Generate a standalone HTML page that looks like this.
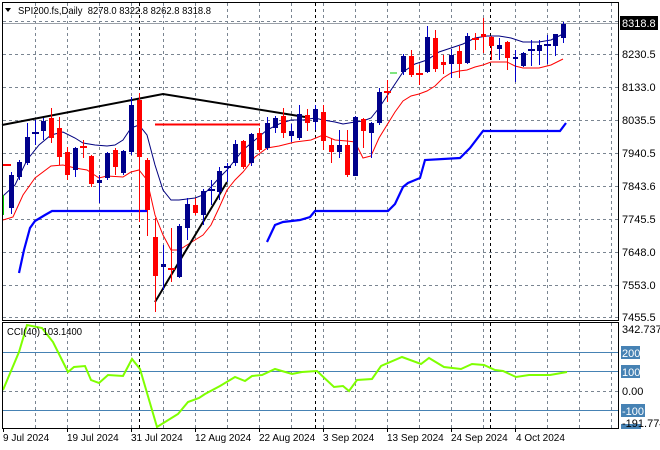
<!DOCTYPE html>
<html><head><style>
html,body{margin:0;padding:0;background:#fff;}
svg{display:block;font-family:"Liberation Sans",sans-serif;font-size:11px;}
.s{font-size:10px;}
</style></head><body>
<svg width="660" height="450" viewBox="0 0 660 450" xmlns="http://www.w3.org/2000/svg">
<rect width="660" height="450" fill="#fff"/>
<g stroke="#7a8591" stroke-width="1" stroke-dasharray="3,3" fill="none" shape-rendering="crispEdges">
<path d="M3 21.5H618M3 54.5H618M3 87.5H618M3 120.5H618M3 153.5H618M3 186.5H618M3 219.5H618M3 252.5H618M3 285.5H618M3 317.5H618"/>
<path d="M35.5 3V320M67.5 3V320M99.5 3V320M131.5 3V320M163.5 3V320M195.5 3V320M227.5 3V320M259.5 3V320M291.5 3V320M323.5 3V320M355.5 3V320M387.5 3V320M419.5 3V320M451.5 3V320M483.5 3V320M515.5 3V320M547.5 3V320M579.5 3V320M611.5 3V320"/>
<path d="M35.5 323V428M67.5 323V428M99.5 323V428M131.5 323V428M163.5 323V428M195.5 323V428M227.5 323V428M259.5 323V428M291.5 323V428M323.5 323V428M355.5 323V428M387.5 323V428M419.5 323V428M451.5 323V428M483.5 323V428M515.5 323V428M547.5 323V428M579.5 323V428M611.5 323V428M3 391.5H618"/>
</g>
<g stroke="#000" stroke-dasharray="3,3" shape-rendering="crispEdges">
<path d="M139.5 3V320M315.5 3V320M490.5 3V320M139.5 323V428M315.5 323V428M490.5 323V428"/>
</g>
<path d="M3 23.5H618" stroke="#9aa0a8" shape-rendering="crispEdges"/>
<polyline fill="none" stroke="#0000ff" stroke-width="2.2" points="19,273 24,250 30,228 35,221 45,215 52,211 147,211"/>
<polyline fill="none" stroke="#0000ff" stroke-width="2.2" points="267,242 275,225 283,222 300,220 310,217 315,211 388,211 395,204 403,187 408,183 420,178 425,160 460,158 470,148 483,131 560,131 566,123"/>
<polyline fill="none" stroke="#00007f" stroke-width="1" points="3,196 15,185 27,160 39,145 51,135 63,132 75,138 83,143 95,145 107,146 115,145 123,140 131,128 139,125 147,135 155,165 163,190 171,200 179,200 187,199 195,198 203,195 211,187 219,178 227,170 235,160 243,150 255,140 267,130 279,124 291,120 303,120 315,118 323,120 335,122 343,124 355,122 363,121 371,118 379,108 391,90 403,72 415,64 427,60 439,52 451,48 463,44 475,38 487,36 499,36 511,38 523,42 531,42 539,42 551,40 563,34"/>
<polyline fill="none" stroke="#ff0000" stroke-width="1" points="3,220 13,217 23,195 35,178 51,166 63,165 75,168 87,170 99,178 107,176 123,177 131,172 139,170 147,180 155,215 163,235 171,250 179,250 187,245 195,240 203,235 211,225 219,208 227,190 235,180 243,172 255,157 267,148 279,146 295,142 311,140 323,135 335,140 347,141 355,142 363,158 371,156 379,138 387,125 395,112 403,101 411,96 419,94 427,91 435,86 443,78 451,73 459,71 467,70 475,67 483,65 491,62 499,62 507,62 515,66 523,68 531,68 539,68 551,65 563,59"/>
<polyline fill="none" stroke="#000" stroke-width="2" points="2,125 163,94 305,117"/>
<polyline fill="none" stroke="#000" stroke-width="2" points="155,302 227,182"/>
<path d="M155 124.5H260" stroke="#ff0000" stroke-width="2"/>
<path d="M3 165H11" stroke="#ff0000" stroke-width="2"/>
<path d="M3.5 195V215" stroke="#00cc00" stroke-width="1"/>
<path d="M390 73H397" stroke="#00cc00" stroke-width="1"/>
<rect x="2.5" y="2.5" width="616" height="318" fill="none" stroke="#000" shape-rendering="crispEdges"/>
<rect x="2.5" y="322.5" width="616" height="106" fill="none" stroke="#000" shape-rendering="crispEdges"/>
<g stroke="#4682b4" stroke-width="1" shape-rendering="crispEdges">
<path d="M3 352.5H618M3 371.5H618M3 410.5H618"/>
</g>
<clipPath id="cc"><rect x="3" y="323" width="615" height="105"/></clipPath>
<polyline clip-path="url(#cc)" fill="none" stroke="#7fff00" stroke-width="2" points="3,390 19,352 27,325 42,328 53,342 68,372 74,367 85,366 91,380 99,383 108,375 123,376 132,359 140,369 157,427 178,414 188,402 199,398 205,394 220,386 235,377 245,381 252,376 262,375 275,369 292,374 302,372 317,371 334,387 343,386 349,391 357,380 372,379 381,366 402,357 421,364 429,358 444,367 461,369 472,364 484,365 495,370 503,371 516,377 529,375 550,375 567,372"/>
<text class="s" x="7" y="335" fill="#000" textLength="75" lengthAdjust="spacingAndGlyphs">CCI(40) 103.1400</text>
<path d="M5 8l6 0l-3 4z" fill="#000"/>
<text class="s" x="18" y="14" fill="#000" textLength="193" lengthAdjust="spacingAndGlyphs" xml:space="preserve">SPI200.fs,Daily  8278.0 8322.8 8262.8 8318.8</text>
<g fill="#000">
<text x="622" y="58">8230.5</text>
<text x="622" y="91">8133.0</text>
<text x="622" y="124">8035.5</text>
<text x="622" y="157">7940.5</text>
<text x="622" y="190">7843.6</text>
<text x="622" y="223">7745.5</text>
<text x="622" y="256">7648.0</text>
<text x="622" y="289">7553.0</text>
<text x="622" y="321">7455.5</text>
<text x="622" y="333">342.7377</text>
<text x="622" y="395">0.00</text>
</g>
<path d="M618.5 21V320M618.5 323V428" stroke="#000"/>
<rect x="620" y="16" width="38" height="14" fill="#000"/>
<text x="622" y="27" fill="#fff">8318.8</text>
<rect x="621" y="346" width="19" height="13" fill="#4682b4"/><text x="622" y="357" fill="#fff">200</text>
<rect x="621" y="365" width="19" height="13" fill="#4682b4"/><text x="622" y="376" fill="#fff">100</text>
<rect x="621" y="404" width="24" height="13" fill="#4682b4"/><text x="622" y="415" fill="#fff">-100</text>
<rect x="621" y="424" width="20" height="5" fill="#4682b4"/>
<text x="622" y="427" fill="#000">-191.774</text>
<g fill="#000" class="s">
<text x="3" y="441">9 Jul 2024</text>
<text x="67" y="441">19 Jul 2024</text>
<text x="131" y="441">31 Jul 2024</text>
<text x="195" y="441">12 Aug 2024</text>
<text x="259" y="441">22 Aug 2024</text>
<text x="323" y="441">3 Sep 2024</text>
<text x="387" y="441">13 Sep 2024</text>
<text x="451" y="441">24 Sep 2024</text>
<text x="516" y="441">4 Oct 2024</text>
</g>
<path d="M3.5 429v3M67.5 429v3M131.5 429v3M195.5 429v3M259.5 429v3M323.5 429v3M387.5 429v3M451.5 429v3M515.5 429v3" stroke="#000"/>
<g shape-rendering="crispEdges">
<g stroke-width="1">
<path stroke="#0000cc" d="M11.5 172V214M19.5 160V180M27.5 123V165M35.5 120V145M43.5 118V140M75.5 147V177M99.5 175V203M107.5 152V180M123.5 150V175M131.5 97V155M163.5 245V290M179.5 224V278M187.5 198V240M203.5 189V225M211.5 180V205M219.5 167V200M227.5 163V182M235.5 140V166M251.5 133V166M267.5 117V150M275.5 116V133M291.5 124V142M299.5 105V140M315.5 105V130M339.5 130V158M355.5 116V176M371.5 122V158M379.5 88V125M403.5 54V75M427.5 26V73M451.5 49V78M467.5 33V64M499.5 38V60M515.5 50V82M523.5 52V67M531.5 40V66M539.5 40V65M547.5 35V64M555.5 34V56M563.5 22V43"/>
<path stroke="#ff0000" d="M51.5 108V143M59.5 117V165M67.5 147V180M83.5 140V158M91.5 155V187M115.5 148V175M139.5 93V222M147.5 158V236M155.5 218V312M171.5 228V282M195.5 198V215M243.5 140V169M259.5 128V152M283.5 108V138M307.5 109V131M323.5 105V150M331.5 139V163M347.5 130V177M363.5 118V148M387.5 80V102M411.5 50V77M419.5 65V85M435.5 30V72M443.5 55V74M459.5 46V78M475.5 33V50M483.5 18V53M491.5 36V60M507.5 41V70"/>
</g>
<g fill="#00008b">
<rect x="9" y="175" width="5" height="33"/><rect x="17" y="162" width="5" height="15"/><rect x="25" y="137" width="5" height="26"/><rect x="32" y="132" width="7" height="2"/><rect x="41" y="121" width="5" height="10"/><rect x="73" y="148" width="5" height="22"/><rect x="97" y="180" width="5" height="3"/><rect x="105" y="153" width="5" height="25"/><rect x="121" y="151" width="5" height="22"/><rect x="129" y="105" width="5" height="47"/><rect x="161" y="264" width="5" height="3"/><rect x="177" y="226" width="5" height="51"/><rect x="185" y="204" width="5" height="24"/><rect x="201" y="191" width="5" height="24"/><rect x="208" y="189" width="7" height="2"/><rect x="217" y="171" width="5" height="21"/><rect x="224" y="166" width="7" height="2"/><rect x="233" y="144" width="5" height="19"/><rect x="249" y="134" width="5" height="29"/><rect x="265" y="123" width="5" height="25"/><rect x="273" y="118" width="5" height="10"/><rect x="289" y="131" width="5" height="5"/><rect x="297" y="114" width="5" height="24"/><rect x="313" y="109" width="5" height="13"/><rect x="337" y="145" width="5" height="7"/><rect x="353" y="117" width="5" height="59"/><rect x="369" y="123" width="5" height="10"/><rect x="377" y="92" width="5" height="31"/><rect x="401" y="56" width="5" height="16"/><rect x="425" y="37" width="5" height="35"/><rect x="449" y="55" width="5" height="9"/><rect x="465" y="36" width="5" height="27"/><rect x="497" y="45" width="5" height="4"/><rect x="513" y="57" width="5" height="2"/><rect x="521" y="53" width="5" height="13"/><rect x="528" y="49" width="7" height="2"/><rect x="537" y="45" width="5" height="6"/><rect x="544" y="44" width="7" height="2"/><rect x="553" y="34" width="5" height="12"/><rect x="561" y="24" width="5" height="14"/>
</g>
<g fill="#ff0000">
<rect x="49" y="118" width="5" height="20"/><rect x="57" y="128" width="5" height="29"/><rect x="65" y="152" width="5" height="23"/><rect x="80" y="146" width="7" height="2"/><rect x="89" y="156" width="5" height="28"/><rect x="113" y="150" width="5" height="17"/><rect x="137" y="100" width="5" height="57"/><rect x="145" y="160" width="5" height="50"/><rect x="153" y="237" width="5" height="39"/><rect x="168" y="268" width="7" height="2"/><rect x="193" y="205" width="5" height="8"/><rect x="241" y="141" width="5" height="26"/><rect x="257" y="133" width="5" height="17"/><rect x="281" y="116" width="5" height="17"/><rect x="305" y="115" width="5" height="8"/><rect x="321" y="112" width="5" height="29"/><rect x="329" y="145" width="5" height="7"/><rect x="345" y="145" width="5" height="30"/><rect x="361" y="119" width="5" height="12"/><rect x="384" y="91" width="7" height="2"/><rect x="409" y="56" width="5" height="19"/><rect x="416" y="73" width="7" height="2"/><rect x="433" y="38" width="5" height="31"/><rect x="441" y="62" width="5" height="3"/><rect x="457" y="51" width="5" height="13"/><rect x="472" y="38" width="7" height="2"/><rect x="481" y="34" width="5" height="3"/><rect x="489" y="37" width="5" height="9"/><rect x="505" y="42" width="5" height="16"/>
</g>
</g>
</svg>
</body></html>
